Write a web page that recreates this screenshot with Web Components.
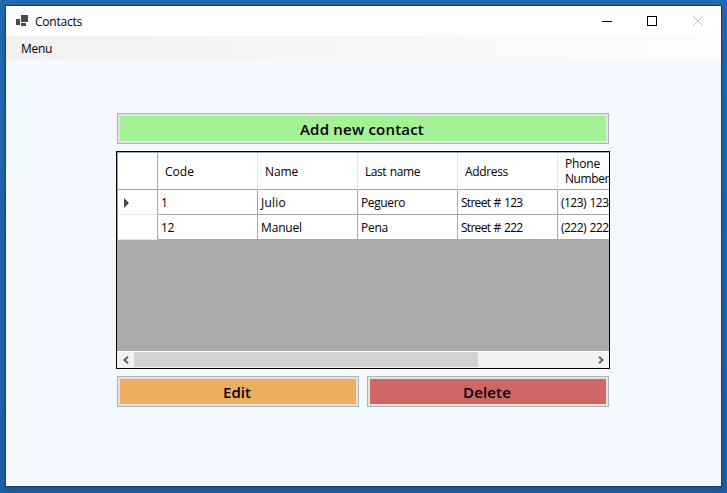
<!DOCTYPE html>
<html lang="en"><head><meta charset="utf-8"><title>Contacts</title>
<style>html,body{margin:0;height:100%;overflow:hidden}body{background:linear-gradient(#226ab5,#1d5fa8);font:12px/15px "Open Sans","Noto Sans",sans-serif;color:#000}</style></head>
<body><contacts-app></contacts-app>
<script>
function define(name, html, setup) {
  const t = document.createElement('template');
  t.innerHTML = html;
  customElements.define(name, class extends HTMLElement {
    constructor() { super(); this.attachShadow({mode:'open'}).append(t.content.cloneNode(true)); }
    connectedCallback() { if (setup) setup(this); }
  });
}
// Text run whose tracking is adjusted to the advance width in its "w" attribute.
define('ui-text', `<style>:host{display:block;white-space:nowrap;word-spacing:var(--space,1px)}span{display:block;width:max-content}</style><span><slot></slot></span>`, el => {
  const s = el.shadowRoot.querySelector('span'), w = +el.getAttribute('w');
  if (w) s.style.letterSpacing = (w - s.getBoundingClientRect().width) / el.textContent.length + 'px';
});
define('title-bar', `<style>
:host{display:flex;align-items:center;height:30px;background:#fff;padding:0 1px 0 10px;box-sizing:border-box}
.logo{margin:-2px 7px 0 0}.t{flex:1}svg{display:block}.ctl{width:46px;display:flex;justify-content:center;padding-bottom:1px}.ctl:last-child{width:45px}.min{width:44px}
</style><svg class="logo" width="12" height="11" shape-rendering="crispEdges" fill="#4a4a4a"><path d="M0 4h4v6H0zM5 0h7v7H5zM5 8h5v3H5z"/></svg>
<div class="t"><slot></slot></div>
<div class="ctl min"><svg width="10" height="10" shape-rendering="crispEdges"><path d="M0 5h10v1H0z"/></svg></div>
<div class="ctl"><svg width="10" height="10" shape-rendering="crispEdges"><path d="M.5.5h9v9h-9z" fill="none" stroke="#000"/></svg></div>
<div class="ctl"><svg width="10" height="10"><path d="M0 0l10 10M10 0L0 10" stroke="#c4c4c4" fill="none"/></svg></div>`);
define('menu-bar', `<style>:host{display:flex;align-items:center;height:24px;padding-left:15px;background:linear-gradient(90deg,#f1f1f1,#fdfdfd)}</style><slot></slot>`);
define('color-button', `<style>:host{--space:0px;display:flex;align-items:center;justify-content:center;box-sizing:border-box;height:31px;flex:1;padding-right:2px;border:1px solid #b2b2b2;box-shadow:inset 0 0 0 2px #e3e3e3;background:var(--fill);font:600 15px/22px "Open Sans","Noto Sans",sans-serif}</style><slot></slot>`);
define('grid-cell', `<style>
:host{display:flex;align-items:center;box-sizing:border-box;width:100px;flex:none;height:25px;padding:1px 0 0 3px;border-right:1px solid #a6a6a6;border-bottom:1px solid #a6a6a6;background:#fff}
:host([head]){height:37px;padding:0 0 0 7px;border-right-color:#e5e5e5}
:host([row]){width:40px;padding:2px 0 0 6px;border-bottom-color:#e8e8e8}
:host([corner]){border-color:#a6a6a6}
:host([two]) {flex-direction:column;align-items:flex-start;justify-content:center}
</style><slot></slot>`);
define('grid-row', `<style>:host{display:flex;width:540px}</style><slot></slot>`);
define('scroll-bar', `<style>:host{display:flex;height:16px;border-top:1px solid #fff;background:#f1f1f1;margin-top:auto}
div{width:17px;display:flex;align-items:center;justify-content:center;padding-bottom:1px;box-sizing:border-box}i{width:344px;height:15px;background:#d2d2d2}.r{margin-left:auto}</style>
<div><svg width="8" height="8"><path d="M6 .8L2.4 4 6 7.2" fill="none" stroke="#606060" stroke-width="2"/></svg></div><i></i><div class="r"><svg width="8" height="8"><path d="M2 .8L5.6 4 2 7.2" fill="none" stroke="#606060" stroke-width="2"/></svg></div>`);
define('data-grid', `<style>:host{display:flex;flex-direction:column;box-sizing:border-box;width:494px;height:218px;margin:7px 0;border:1px solid #000;background:#ababab;overflow:hidden}
.rows{border-top:1px solid #a6a6a6;border-left:1px solid #a6a6a6;overflow:hidden}</style><div class="rows"><slot></slot></div><scroll-bar></scroll-bar>`);
define('app-window', `<style>:host{display:block;box-sizing:border-box;width:717px;height:482px;border:1px solid #1c3f67;background:#f4f8ff;box-shadow:0 2px 6px #0003}</style><slot></slot>`);
define('contacts-app', `<style>:host{display:block;padding:5px}
main{padding:53px 111px 0 110px}.b{display:flex;gap:8px;padding:0 1px}
.arrow{display:block}</style>
<app-window><title-bar><ui-text w="47">Contacts</ui-text></title-bar>
<menu-bar><ui-text w="31">Menu</ui-text></menu-bar>
<main><div class="b"><color-button style="--fill:#a4f198"><ui-text w="124">Add new contact</ui-text></color-button></div>
<data-grid>
<grid-row><grid-cell head row corner></grid-cell><grid-cell head><ui-text w="29">Code</ui-text></grid-cell><grid-cell head><ui-text w="33">Name</ui-text></grid-cell><grid-cell head><ui-text w="55">Last name</ui-text></grid-cell><grid-cell head><ui-text w="43">Address</ui-text></grid-cell><grid-cell head two><ui-text w="35">Phone</ui-text><ui-text w="44">Number</ui-text></grid-cell></grid-row>
<grid-row><grid-cell row><svg class="arrow" width="5" height="10"><path d="M0 0l5 5-5 5z" fill="#484848"/></svg></grid-cell><grid-cell><ui-text w="7">1</ui-text></grid-cell><grid-cell><ui-text w="25">Julio</ui-text></grid-cell><grid-cell><ui-text w="44">Peguero</ui-text></grid-cell><grid-cell><ui-text w="61.5">Street # 123</ui-text></grid-cell><grid-cell><ui-text w="47.5">(123) 123</ui-text></grid-cell></grid-row>
<grid-row><grid-cell row></grid-cell><grid-cell><ui-text w="13">12</ui-text></grid-cell><grid-cell><ui-text w="41">Manuel</ui-text></grid-cell><grid-cell><ui-text w="27">Pena</ui-text></grid-cell><grid-cell><ui-text w="61.5">Street # 222</ui-text></grid-cell><grid-cell><ui-text w="47.5">(222) 222</ui-text></grid-cell></grid-row>
</data-grid>
<div class="b"><color-button style="--fill:#f0ad62"><ui-text w="28">Edit</ui-text></color-button><color-button style="--fill:#cd6665"><ui-text w="48">Delete</ui-text></color-button></div>
</main></app-window>`);
</script></body></html>
